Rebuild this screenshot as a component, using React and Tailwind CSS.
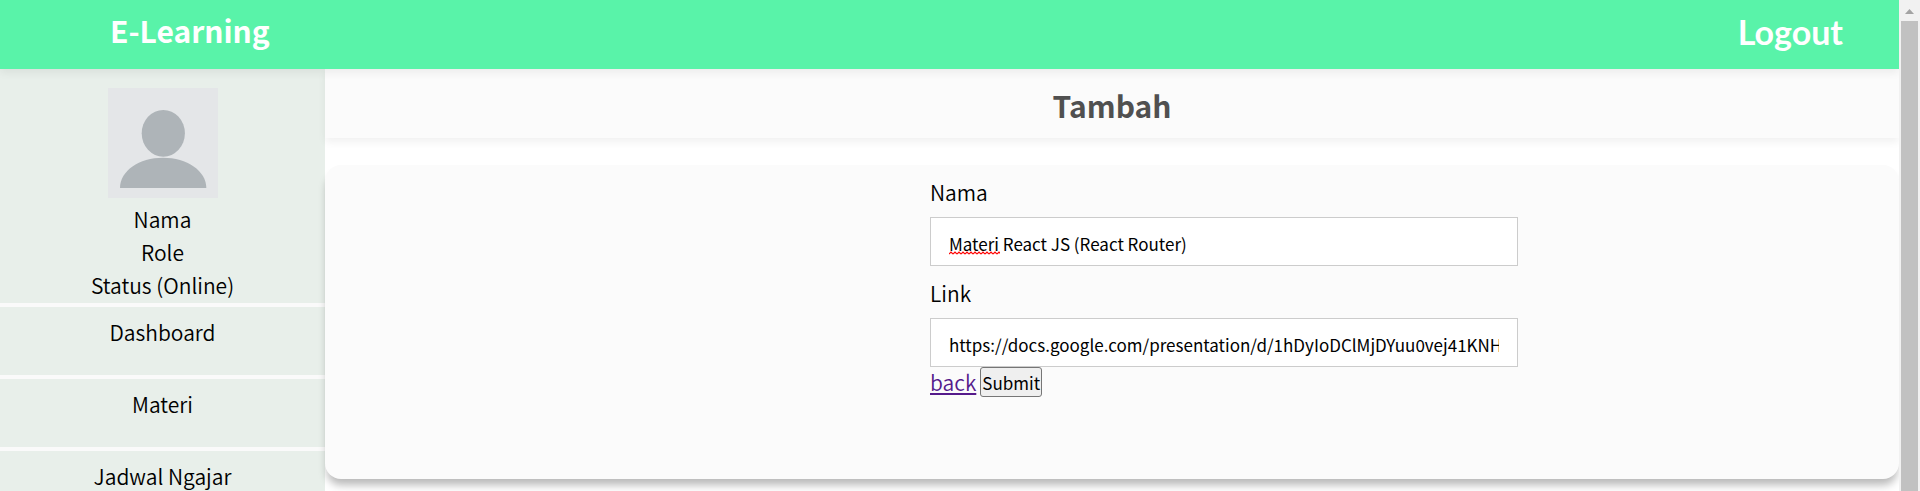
import React from "react";

const menu = ["Dashboard", "Materi", "Jadwal Ngajar"];

function Avatar() {
  return (
    <svg className="size-[110px]" viewBox="0 0 110 110" role="img" aria-label="Profile">
      <rect width="110" height="110" fill="#e4e6e8" />
      <ellipse cx="55.3" cy="45.3" rx="21.6" ry="23.4" fill="#aeb4b8" />
      <path d="M12 100C12 83 31 69.800 55 69.800S98.300 83 98.300 100Z" fill="#aeb4b8" />
    </svg>
  );
}

function Header() {
  return (
    <header className="relative z-20 flex h-[69px] shrink-0 justify-between bg-[#59f3a9] pr-14 pl-[110px] text-[30px] leading-[60px] font-bold text-white shadow-[0_4px_8px_rgba(0,0,0,0.06)]">
      <h1>E-Learning</h1>
      <a href="#logout" className="font-[Lato,sans-serif] text-[34px] leading-[64px]">Logout</a>
    </header>
  );
}

function Sidebar() {
  return (
    <aside className="w-[325px] shrink-0 bg-[#fafafa] text-center">
      <div className="flex h-[234px] flex-col items-center bg-[#e8efea] pt-[19px]">
        <Avatar />
        <div className="pt-[5px] leading-[33px]">
          <p>Nama</p>
          <p>Role</p>
          <p>Status (Online)</p>
        </div>
      </div>
      <nav className="flex flex-col gap-1 pt-1">
        {menu.map((item) => (
          <a key={item} href="#menu" className="block h-[68px] bg-[#e8efea] pt-2.5 leading-[30px]">
            {item}
          </a>
        ))}
      </nav>
    </aside>
  );
}

function Field({ id, label, value, children }) {
  return (
    <div>
      <label htmlFor={id} className="block pt-[11px] pb-[9px] leading-8">{label}</label>
      <div className="relative">
        <input
          id={id}
          type="text"
          defaultValue={value}
          spellCheck={false}
          className="block h-[49px] w-full border border-[#ccc] bg-white px-[18px] pt-1 text-[17px] font-normal outline-none"
        />
        {children}
      </div>
    </div>
  );
}

function Squiggle() {
  return (
    <svg className="absolute top-[34px] left-[19px] h-1 w-[51px]" aria-hidden="true">
      <defs>
        <pattern id="wave" width="4" height="4" patternUnits="userSpaceOnUse">
          <path d="M0 3L2 1L4 3" fill="none" stroke="#f00" strokeWidth="1.2" />
        </pattern>
      </defs>
      <rect width="51" height="4" fill="url(#wave)" />
    </svg>
  );
}

function ScrollBar() {
  return (
    <div className="flex w-[21px] shrink-0 flex-col items-center bg-[#f1f1f1]" aria-hidden="true">
      <svg className="h-[21px] w-[21px] shrink-0" viewBox="0 0 21 21">
        <path d="M6 14L10.500 9L15 14Z" fill="#a3a3a3" />
      </svg>
      <div className="w-[17px] grow bg-[#c1c1c1]" />
    </div>
  );
}

export default function App() {
  return (
    <div className="flex h-screen overflow-hidden bg-white font-['Noto_Sans_CJK_SC',sans-serif] text-[21px] font-[350] text-black">
      <div className="flex min-w-0 grow flex-col overflow-hidden">
        <Header />
        <div className="flex grow">
          <Sidebar />
          <main className="min-w-0 grow">
            <h2 className="relative h-[69px] bg-[#fbfbfb] text-center text-[30px] leading-[72px] font-bold text-[#505050] shadow-[0_4px_8px_rgba(0,0,0,0.06)]">
              Tambah
            </h2>
            <section className="mt-[27px] grid h-[314px] grid-cols-[605fr_588fr_381fr] rounded-2xl bg-[#fbfbfb] shadow-[0_8px_8px_-2px_rgba(0,0,0,0.28)]">
              <form className="col-start-2 min-w-0" onSubmit={(e) => e.preventDefault()}>
                <Field id="nama" label="Nama" value="Materi React JS (React Router)">
                  <Squiggle />
                </Field>
                <Field
                  id="link"
                  label="Link"
                  value="https://docs.google.com/presentation/d/1hDyIoDClMjDYuu0vej41KNHq8ZxT"
                />
                <div className="flex gap-1 leading-[30px]">
                  <a href="#back" className="text-[#551a8b] underline">back</a>
                  <button type="submit" className="h-[30px] rounded-[3px] border border-[#767676] bg-[#efefef] px-px pt-px text-[17px] leading-7 font-normal">
                    Submit
                  </button>
                </div>
              </form>
            </section>
          </main>
        </div>
      </div>
      <ScrollBar />
    </div>
  );
}
